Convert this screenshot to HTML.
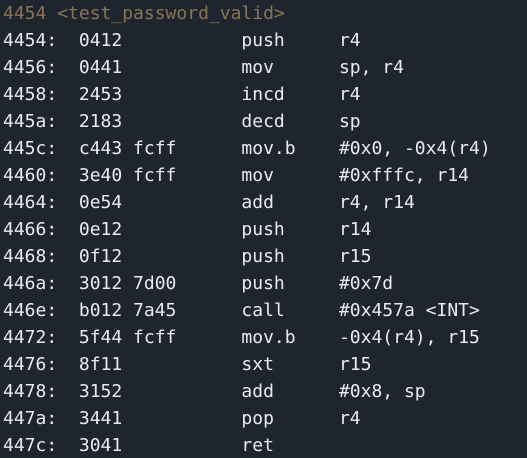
<!DOCTYPE html>
<html><head><meta charset="utf-8"><style>
html,body{margin:0;padding:0;width:527px;height:458px;overflow:hidden;background:#1e252f;}
pre{margin:0;padding:0 0 0 3px;font-family:"DejaVu Sans Mono",monospace;font-size:18px;line-height:27px;color:#e8ecef;white-space:pre;}
.h{color:#8a7552;}
</style></head><body><pre><span class="h">4454 &lt;test_password_valid&gt;</span>
4454:  0412           push     r4
4456:  0441           mov      sp, r4
4458:  2453           incd     r4
445a:  2183           decd     sp
445c:  c443 fcff      mov.b    #0x0, -0x4(r4)
4460:  3e40 fcff      mov      #0xfffc, r14
4464:  0e54           add      r4, r14
4466:  0e12           push     r14
4468:  0f12           push     r15
446a:  3012 7d00      push     #0x7d
446e:  b012 7a45      call     #0x457a &lt;INT&gt;
4472:  5f44 fcff      mov.b    -0x4(r4), r15
4476:  8f11           sxt      r15
4478:  3152           add      #0x8, sp
447a:  3441           pop      r4
447c:  3041           ret</pre></body></html>
